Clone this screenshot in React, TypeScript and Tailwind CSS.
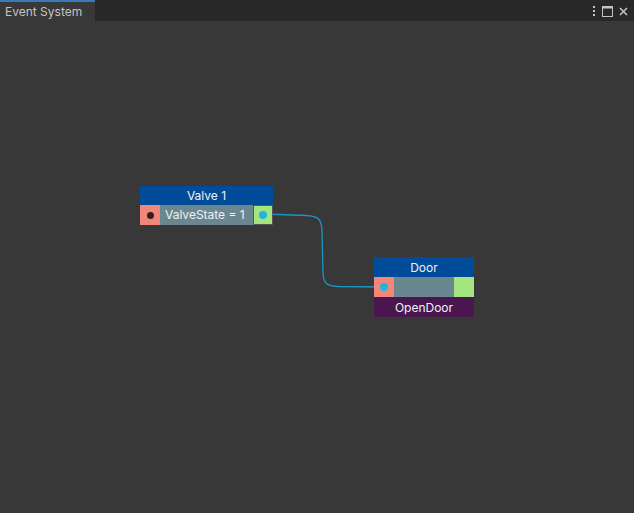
export default function App() {
  return (
    <div className="flex h-[513px] w-[634px] flex-col overflow-hidden bg-[#383838] font-['Inter',sans-serif] text-[12px]">
      <div className="flex h-[21px] shrink-0 items-stretch bg-[#282828]">
        <div className="flex w-[95px] items-center border-t-2 border-[#3a79bb] bg-[#383838] pl-[5px] pt-[1px] text-[#c4c4c4]">
          Event System
        </div>
        <div className="flex-1" />
        <div className="flex items-center gap-[6px] pr-[6px] pt-[1px] text-[#c4c4c4]">
          <svg width="4" height="12" viewBox="0 0 4 12">
            <rect x="1" y="1" width="2" height="2" fill="#c4c4c4" />
            <rect x="1" y="5" width="2" height="2" fill="#c4c4c4" />
            <rect x="1" y="9" width="2" height="2" fill="#c4c4c4" />
          </svg>
          <svg width="11" height="11" viewBox="0 0 11 11">
            <rect x="0.5" y="0.5" width="10" height="10" fill="none" stroke="#c4c4c4" strokeWidth="1" />
            <rect x="0.5" y="0.5" width="10" height="2" fill="#c4c4c4" />
          </svg>
          <svg width="9" height="9" viewBox="0 0 9 9">
            <path d="M1 1 L8 8 M8 1 L1 8" stroke="#c4c4c4" strokeWidth="1.5" />
          </svg>
        </div>
      </div>

      <div className="relative flex-1">
        <svg className="absolute left-0 top-0" width="634" height="492" viewBox="0 21 634 492">
          <path
            d="M263 214 L306 215.5 C318 216 322 219 322 232 L323 272 C323 283 327 286 338 286.5 L384 287"
            fill="none"
            stroke="#1597c4"
            strokeWidth="1.3"
          />
        </svg>

        {/* Valve 1 */}
        <div className="absolute left-[140px] top-[165px] w-[133px]">
          <div className="flex h-[19px] items-center justify-center pt-[1px] bg-[#014c9a] text-[#eef2f6]">Valve 1</div>
          <div className="flex h-[20px]">
            <div className="flex w-[20px] items-center justify-center bg-[#f0877a]">
              <div className="h-[7px] w-[7px] rounded-full bg-[#3a1c1c]" />
            </div>
            <div className="flex flex-1 items-center bg-[#6a878f] pl-[5px] text-[#eef2f6]">ValveState = 1</div>
            <div className="relative z-10 flex w-[20px] items-center justify-center border border-[#555555] bg-[#a4e57f]">
              <div className="h-[8px] w-[8px] rounded-full bg-[#1fb6dc]" />
            </div>
          </div>
        </div>

        {/* Door */}
        <div className="absolute left-[374px] top-[236px] w-[100px]">
          <div className="flex h-[20px] items-center justify-center pt-[1px] bg-[#014c9a] text-[#eef2f6]">Door</div>
          <div className="flex h-[20px]">
            <div className="relative z-10 flex w-[20px] items-center justify-center bg-[#f0877a]">
              <div className="h-[8px] w-[8px] rounded-full bg-[#1fb6dc]" />
            </div>
            <div className="flex-1 bg-[#6a878f]" />
            <div className="w-[20px] bg-[#a4e57f]" />
          </div>
          <div className="flex h-[20px] items-center justify-center pt-[1px] bg-[#4a1650] text-[#eef2f6]">OpenDoor</div>
        </div>
      </div>
    </div>
  );
}
